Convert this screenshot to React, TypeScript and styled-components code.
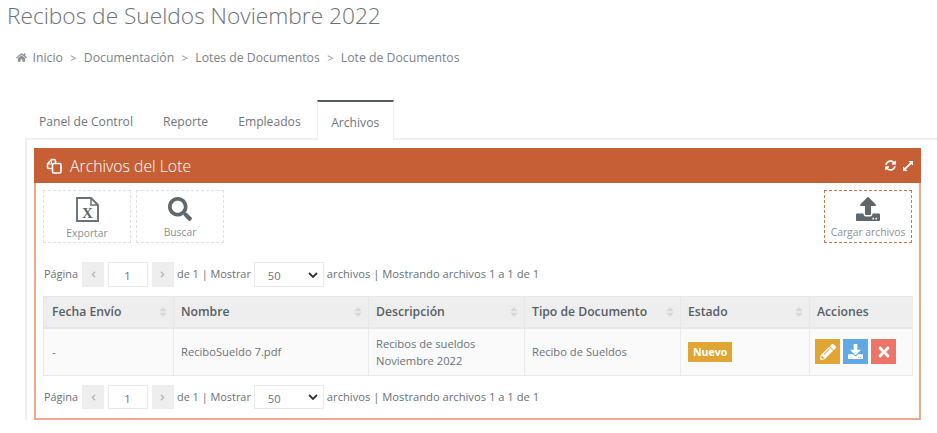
import * as React from "react";
import styled, { createGlobalStyle } from "styled-components";
import {
  FaChevronLeft,
  FaChevronRight,
  FaDownload,
  FaHome,
  FaPencilAlt,
  FaSearch,
  FaSort,
  FaSyncAlt,
  FaTimes,
  FaUpload,
} from "react-icons/fa";

const GlobalStyle = createGlobalStyle`
  html, body {
    margin: 0;
    background: #ffffff;
  }
  body {
    font-family: "Open Sans", "Liberation Sans", sans-serif;
    color: #67727c;
    overflow: hidden;
  }
`;

const Page = styled.div`
  width: 937px;
  height: 433px;
  overflow: hidden;
  background: #ffffff;
`;

const Title = styled.h1`
  margin: 0;
  padding: 0 0 0 7px;
  height: 34px;
  line-height: 32px;
  font-size: 22.7px;
  font-weight: 300;
  color: #6b7178;
`;

const Breadcrumb = styled.div`
  display: flex;
  align-items: center;
  gap: 5.5px;
  height: 20px;
  margin-top: 13px;
  padding-left: 16px;
  font-size: 12.25px;
  color: #7b8289;

  svg {
    color: #8a9096;
  }
`;

const Sep = styled.span`
  width: 8px;
  text-align: center;
  font-size: 11px;
  color: #8a9096;
  margin: 0 1px;
`;

const TabBar = styled.div`
  display: flex;
  height: 38px;
  margin: 33px 0 0 25px;
  border-bottom: 2px solid #eef0f2;
`;

const Tab = styled.div<{ $active?: boolean }>`
  box-sizing: border-box;
  display: flex;
  align-items: center;
  justify-content: center;
  height: ${(p) => (p.$active ? "40px" : "38px")};
  width: ${(p) => (p.$active ? "77px" : "auto")};
  margin-left: ${(p) => (p.$active ? "1px" : "0")};
  padding: ${(p) => (p.$active ? "0" : "0 15px")};
  padding-top: 2px;
  font-size: 12.15px;
  color: #6f767d;
  background: #ffffff;
  border-top: ${(p) => (p.$active ? "2px solid #555b60" : "2px solid transparent")};
  border-left: ${(p) => (p.$active ? "1px solid #eceef0" : "0")};
  border-right: ${(p) => (p.$active ? "1px solid #eceef0" : "0")};

  &:first-child {
    padding-left: 14px;
  }
`;

const TabPane = styled.div`
  margin-left: 25px;
  border-left: 2px solid #eef0f2;
  padding: 8px 16px 0 7px;
`;

const Panel = styled.section`
  box-sizing: border-box;
  width: 887px;
  height: 272px;
  border: 2px solid #eba98f;
  border-top: 0;
`;

const PanelHeader = styled.header`
  display: flex;
  align-items: center;
  height: 35px;
  margin: 0 -2px;
  padding: 0 8px 0 12px;
  background: #c75f36;
  color: #ffffff;
  font-size: 15.8px;
  font-weight: 300;

  > svg:first-child {
    margin-right: 8px;
  }
`;

const PanelTitle = styled.span`
  flex: 1;
`;

const HeaderTools = styled.div`
  display: flex;
  align-items: center;
  gap: 7px;
`;

const PanelBody = styled.div`
  padding: 7px 7px 0 7px;
`;

const Toolbar = styled.div`
  display: flex;
  justify-content: space-between;
`;

const ToolGroup = styled.div`
  display: flex;
  gap: 5px;
`;

const ToolButton = styled.button<{ $accent?: boolean }>`
  box-sizing: border-box;
  display: flex;
  flex-direction: column;
  align-items: center;
  justify-content: flex-start;
  width: 88px;
  height: 53px;
  padding: 6px 0 0;
  background: #ffffff;
  border: ${(p) => (p.$accent ? "1.5px dashed #d0744f" : "1px dashed #dfe1e3")};
  font-family: inherit;
  font-size: 10.3px;
  white-space: nowrap;
  color: #8a9096;

  svg {
    color: #5f666c;
    margin-bottom: 4px;
  }
`;

const Pager = styled.div<{ $top?: boolean }>`
  display: flex;
  align-items: center;
  height: ${(p) => (p.$top ? "25px" : "24px")};
  margin-top: ${(p) => (p.$top ? "19px" : "9px")};
  padding-left: 1px;
  font-size: 10.9px;
  color: #687078;

  > span:not([data-arrow]) {
    margin-bottom: 2px;
  }
`;

const PagerArrow = styled.span`
  display: flex;
  align-items: center;
  justify-content: center;
  width: 22px;
  height: 100%;
  margin: 0 3.5px 0 4px;
  background: #eeeeee;
  color: #aab0b5;
`;

const PageInput = styled.input`
  box-sizing: border-box;
  width: 40px;
  height: 100%;
  margin: 0;
  border: 1px solid #e8e9eb;
  text-align: center;
  font-family: inherit;
  font-size: 11.2px;
  color: #687078;
  padding: 2px 0 0;
`;

const PageSelect = styled.select`
  box-sizing: border-box;
  width: 70px;
  height: 100%;
  margin: 0 3px 0 3px;
  padding: 2px 0 0 13px;
  border: 1px solid #e8e9eb;
  border-radius: 0;
  appearance: none;
  background: #ffffff
    url("data:image/svg+xml,%3Csvg xmlns='http://www.w3.org/2000/svg' width='10' height='6'%3E%3Cpath d='M1 1l4 4 4-4' fill='none' stroke='%23333' stroke-width='1.8'/%3E%3C/svg%3E")
    no-repeat right 5px center;
  font-family: inherit;
  font-size: 11.2px;
  color: #687078;
`;

const PagerNote = styled.span`
  font-size: 11.2px;
`;

const Table = styled.table`
  width: 869px;
  margin-top: 9px;
  table-layout: fixed;
  border-collapse: collapse;
  font-size: 11.2px;
  color: #6a7279;
`;

const Th = styled.th<{ $w: number }>`
  width: ${(p) => p.$w}px;
  height: 31px;
  padding: 0 4px 0 7px;
  box-sizing: border-box;
  background: #eeeeee;
  border: 1px solid #e6e7e9;
  border-bottom-width: 2px;
  text-align: left;
  font-size: 12.2px;
  font-weight: 600;
  color: #575e65;

  &:first-child {
    padding-left: 8px;
  }
`;

const ThInner = styled.div`
  display: flex;
  align-items: center;
  justify-content: space-between;

  svg {
    color: #d6d8da;
  }
`;

const Td = styled.td`
  height: 48px;
  padding: 0 7px;
  box-sizing: border-box;
  background: #fafafa;
  border: 1px solid #e9eaec;
  line-height: 17px;

  &:first-child {
    padding-left: 8px;
  }
`;

const Badge = styled.span`
  display: inline-block;
  padding: 0 5px;
  height: 20px;
  line-height: 20px;
  background: #e0a533;
  color: #ffffff;
  font-size: 10.6px;
  font-weight: 700;
`;

const ActionRow = styled.div`
  display: flex;
  gap: 3px;
  margin-left: -2px;
`;

const ActionButton = styled.span<{ $color: string }>`
  display: flex;
  align-items: center;
  justify-content: center;
  width: 25px;
  height: 25px;
  background: ${(p) => p.$color};
  color: #ffffff;
`;

const columns = [
  { label: "Fecha Envío", w: 130, sort: true },
  { label: "Nombre", w: 195, sort: true },
  { label: "Descripción", w: 156, sort: true },
  { label: "Tipo de Documento", w: 156, sort: true },
  { label: "Estado", w: 129, sort: true },
  { label: "Acciones", w: 103, sort: false },
];

const CopyIcon = () => (
  <svg width="16" height="16" viewBox="0 0 16 16" fill="none" stroke="#ffffff" strokeWidth="1.6">
    <path d="M6.5 10.5H3a1.5 1.5 0 0 1-1.5-1.5V6l4-4.5H8A1.5 1.5 0 0 1 9.5 3v2" />
    <path d="M5.5 2v4h-4" strokeWidth="1.2" />
    <rect x="6.5" y="5.5" width="8.5" height="9.5" rx="1.5" />
  </svg>
);

const ExpandIcon = () => (
  <svg width="10" height="10" viewBox="0 0 11 11" fill="#ffffff">
    <path d="M6 0h5v5L9.2 3.2 3.2 9.2 5 11H0V6l1.8 1.8 6-6z" />
  </svg>
);

const ExcelIcon = () => (
  <svg width="23" height="25" viewBox="0 0 23 25" fill="none">
    <path d="M1 1h14l7 7v16H1z" stroke="#6a7177" strokeWidth="1.9" />
    <path d="M15 1v7h7" stroke="#6a7177" strokeWidth="1.5" />
    <text x="11.5" y="20.5" textAnchor="middle" fontFamily="Liberation Serif, serif" fontWeight="700" fontSize="15" fill="#5f666c">
      X
    </text>
  </svg>
);

const PagerRow: React.FC<{ top?: boolean }> = ({ top }) => (
  <Pager $top={top}>
    <span>Página</span>
    <PagerArrow data-arrow>
      <FaChevronLeft size={7} />
    </PagerArrow>
    <PageInput defaultValue="1" />
    <PagerArrow data-arrow>
      <FaChevronRight size={7} />
    </PagerArrow>
    <span>de 1 | Mostrar</span>
    <PageSelect defaultValue="50">
      <option value="50">50</option>
    </PageSelect>
    <PagerNote>archivos | Mostrando archivos 1 a 1 de 1</PagerNote>
  </Pager>
);

const App: React.FC = () => {
  return (
    <Page>
      <GlobalStyle />
      <Title>Recibos de Sueldos Noviembre 2022</Title>
      <Breadcrumb>
        <FaHome size={11} />
        <span>Inicio</span>
        <Sep>&gt;</Sep>
        <span>Documentación</span>
        <Sep>&gt;</Sep>
        <span>Lotes de Documentos</span>
        <Sep>&gt;</Sep>
        <span>Lote de Documentos</span>
      </Breadcrumb>
      <TabBar>
        <Tab>Panel de Control</Tab>
        <Tab>Reporte</Tab>
        <Tab>Empleados</Tab>
        <Tab $active>Archivos</Tab>
      </TabBar>
      <TabPane>
        <Panel>
          <PanelHeader>
            <CopyIcon />
            <PanelTitle>Archivos del Lote</PanelTitle>
            <HeaderTools>
              <FaSyncAlt size={11} />
              <ExpandIcon />
            </HeaderTools>
          </PanelHeader>
          <PanelBody>
            <Toolbar>
              <ToolGroup>
                <ToolButton>
                  <ExcelIcon />
                  Exportar
                </ToolButton>
                <ToolButton>
                  <FaSearch size={24} />
                  Buscar
                </ToolButton>
              </ToolGroup>
              <ToolButton $accent>
                <FaUpload size={24} />
                Cargar archivos
              </ToolButton>
            </Toolbar>
            <PagerRow top />
            <Table>
              <thead>
                <tr>
                  {columns.map((c) => (
                    <Th key={c.label} $w={c.w}>
                      <ThInner>
                        {c.label}
                        {c.sort && <FaSort size={12} />}
                      </ThInner>
                    </Th>
                  ))}
                </tr>
              </thead>
              <tbody>
                <tr>
                  <Td>-</Td>
                  <Td>ReciboSueldo 7.pdf</Td>
                  <Td>
                    Recibos de sueldos
                    <br />
                    Noviembre 2022
                  </Td>
                  <Td>Recibo de Sueldos</Td>
                  <Td>
                    <Badge>Nuevo</Badge>
                  </Td>
                  <Td>
                    <ActionRow>
                      <ActionButton $color="#e0a533">
                        <FaPencilAlt size={16} />
                      </ActionButton>
                      <ActionButton $color="#62a8e5">
                        <FaDownload size={15} />
                      </ActionButton>
                      <ActionButton $color="#ec7468">
                        <FaTimes size={16} />
                      </ActionButton>
                    </ActionRow>
                  </Td>
                </tr>
              </tbody>
            </Table>
            <PagerRow />
          </PanelBody>
        </Panel>
      </TabPane>
    </Page>
  );
};

export default App;
